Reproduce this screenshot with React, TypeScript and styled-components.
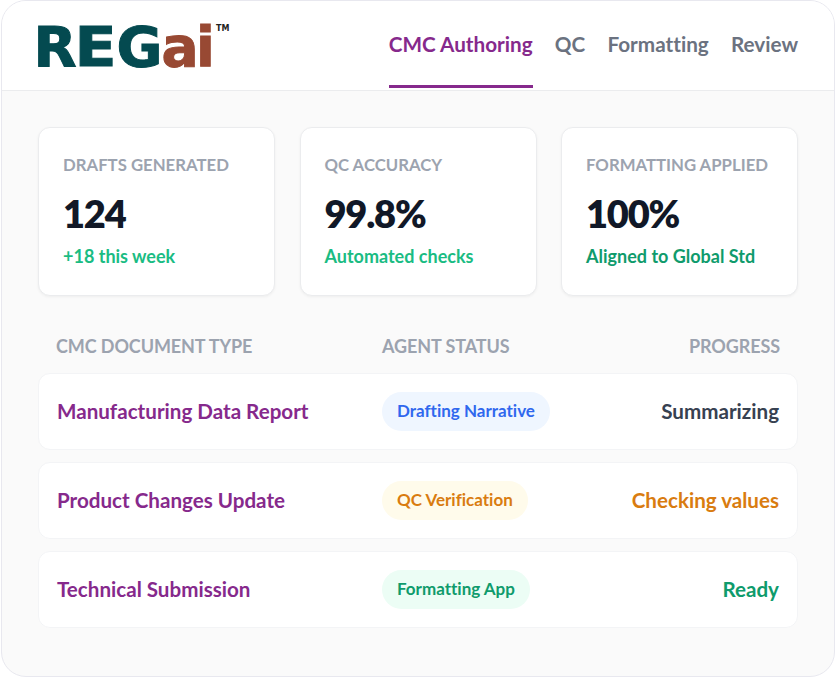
import React from "react";
import styled, { createGlobalStyle } from "styled-components";

const GlobalStyle = createGlobalStyle`
  *, *::before, *::after { box-sizing: border-box; }
  body { margin: 0; background: #fff; font-family: Lato, "Open Sans", sans-serif; font-variant-ligatures: none; }
`;

const Panel = styled.main`
  width: 834px;
  height: 677px;
  margin-left: 1px;
  border: 1px solid #e8e8ef;
  border-radius: 25px;
  background: #fafafa;
  overflow: hidden;
`;

const Header = styled.header`
  display: flex;
  justify-content: space-between;
  height: 90px;
  padding: 0 36px 0 26px;
  background: #fff;
  border-bottom: 1px solid #ebecee;
`;

const Logo = styled.svg`
  display: block;
  width: 210px;
  height: 80px;
  font-family: "DejaVu Sans", sans-serif;
  font-weight: 700;
`;

const Nav = styled.nav`
  display: flex;
  gap: 22.2px;
  height: 87px;
`;

const NavItem = styled.a<{ $active?: boolean }>`
  height: 87px;
  padding-top: 30px;
  border-bottom: 3px solid ${(p) => (p.$active ? "#86298c" : "transparent")};
  color: ${(p) => (p.$active ? "#86298c" : "#6b7280")};
  font-size: 20.7px;
  line-height: 26px;
  font-weight: 700;
  white-space: nowrap;
`;

const Content = styled.div`
  padding: 36px 36px 0;
`;

const Stats = styled.section`
  display: grid;
  grid-template-columns: repeat(3, 1fr);
  gap: 24.5px;
`;

const StatCard = styled.article`
  height: 169px;
  padding: 25px 24px 0;
  border: 1px solid #ebecee;
  border-radius: 12px;
  background: #fff;
  box-shadow: 0 1px 3px rgba(0, 0, 0, 0.05);
  white-space: nowrap;
`;

const StatLabel = styled.div`
  color: #9ca3af;
  font-size: 16.75px;
  line-height: 24px;
  font-weight: 700;
`;

const StatValue = styled.div`
  margin-top: 13px;
  color: #111827;
  font-size: 38px;
  line-height: 46px;
  font-weight: 800;
  letter-spacing: -1.2px;
`;

const StatNote = styled.div<{ $color: string }>`
  margin-top: 8px;
  color: ${(p) => p.$color};
  font-size: 18px;
  line-height: 24px;
  font-weight: 700;
`;

const TableHead = styled.div`
  display: grid;
  grid-template-columns: 326px 1fr auto;
  margin-top: 38px;
  padding: 0 18px;
  color: #9ca3af;
  font-size: 18px;
  line-height: 24px;
  font-weight: 700;
  letter-spacing: -0.1px;
`;

const Rows = styled.section`
  display: flex;
  flex-direction: column;
  gap: 12px;
  margin-top: 15px;
`;

const Row = styled.article`
  display: grid;
  grid-template-columns: 325px 1fr auto;
  align-items: center;
  height: 77px;
  padding: 0 18px;
  border: 1px solid #f3f4f6;
  border-radius: 12px;
  background: #fff;
  font-size: 20.6px;
  line-height: 26px;
  font-weight: 700;
`;

const DocName = styled.span`
  padding-bottom: 2px;
  color: #86298c;
`;

const Badge = styled.span<{ $color: string; $background: string }>`
  justify-self: start;
  height: 39px;
  padding: 0 15px;
  border-radius: 20px;
  background: ${(p) => p.$background};
  color: ${(p) => p.$color};
  font-size: 17px;
  line-height: 38px;
`;

const Progress = styled.span<{ $color: string }>`
  padding-bottom: 2px;
  color: ${(p) => p.$color};
`;

const tabs = ["CMC Authoring", "QC", "Formatting", "Review"];

const stats = [
  { label: "DRAFTS GENERATED", value: "124", note: "+18 this week", color: "#1abc83" },
  { label: "QC ACCURACY", value: "99.8%", note: "Automated checks", color: "#1abc83" },
  { label: "FORMATTING APPLIED", value: "100%", note: "Aligned to Global Std", color: "#0f9b6c" },
];

const documents = [
  { name: "Manufacturing Data Report", status: "Drafting Narrative", badge: "#2f68ee", tint: "#eff6ff", progress: "Summarizing", color: "#374151" },
  { name: "Product Changes Update", status: "QC Verification", badge: "#d97c10", tint: "#fffbeb", progress: "Checking values", color: "#d97c10" },
  { name: "Technical Submission", status: "Formatting App", badge: "#0f9b6c", tint: "#ecfdf5", progress: "Ready", color: "#0f9b6c" },
];

export default function App() {
  return (
    <>
      <GlobalStyle />
      <Panel>
        <Header>
          <Logo viewBox="0 0 210 80" role="img" aria-label="REGai">
            <g fill="#044a50" stroke="#044a50" strokeWidth="1" fontSize="56">
              <text x="5.5" y="65.3">R</text>
              <text transform="translate(46.5 65.3) scale(1.1 1)">E</text>
              <text x="88.5" y="65.3">G</text>
            </g>
            <text x="133.5 168" y="65.3" fill="#984933" stroke="#984933" strokeWidth="1" fontSize="55">ai</text>
            <text x="188" y="30" fontSize="8" fill="#222">TM</text>
          </Logo>
          <Nav>
            {tabs.map((tab, i) => (
              <NavItem key={tab} $active={i === 0}>{tab}</NavItem>
            ))}
          </Nav>
        </Header>
        <Content>
          <Stats>
            {stats.map((s) => (
              <StatCard key={s.label}>
                <StatLabel>{s.label}</StatLabel>
                <StatValue>{s.value}</StatValue>
                <StatNote $color={s.color}>{s.note}</StatNote>
              </StatCard>
            ))}
          </Stats>
          <TableHead>
            <span>CMC DOCUMENT TYPE</span>
            <span>AGENT STATUS</span>
            <span>PROGRESS</span>
          </TableHead>
          <Rows>
            {documents.map((d) => (
              <Row key={d.name}>
                <DocName>{d.name}</DocName>
                <Badge $color={d.badge} $background={d.tint}>{d.status}</Badge>
                <Progress $color={d.color}>{d.progress}</Progress>
              </Row>
            ))}
          </Rows>
        </Content>
      </Panel>
    </>
  );
}
